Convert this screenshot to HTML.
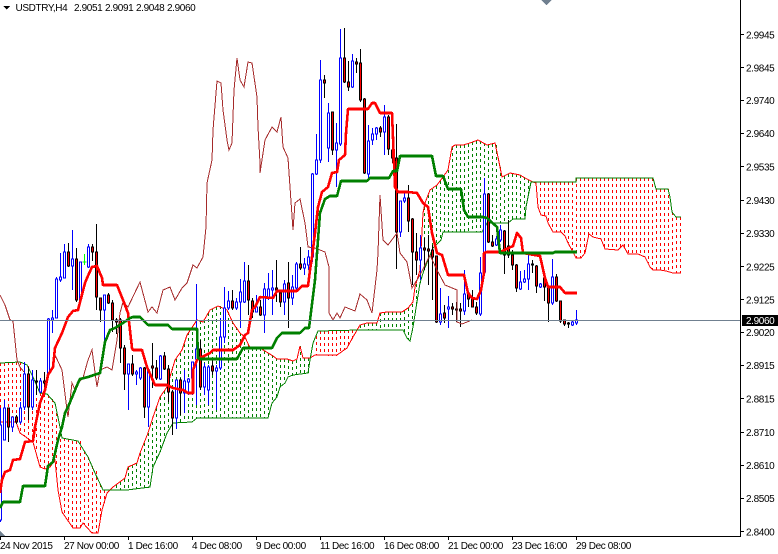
<!DOCTYPE html>
<html><head><meta charset="utf-8"><title>USDTRY,H4</title>
<style>
html,body{margin:0;padding:0;background:#fff}
svg{display:block}
text{font-family:"Liberation Sans",sans-serif;font-size:10px;fill:#000;letter-spacing:-.38px}
</style></head><body>
<svg width="778" height="554" viewBox="0 0 778 554" xmlns="http://www.w3.org/2000/svg">
<g fill="none" shape-rendering="crispEdges">
<!-- red hatch -->
<path stroke="#f00" stroke-dasharray="3 3" d="M.5 363V422M4.5 363V422M8.5 362V422M12.5 362V422M16.5 362V422M20.5 362V433M24.5 363V436M28.5 366V440M32.5 375V441M36.5 386V452M40.5 393V467M44.5 394V469M48.5 395V468M52.5 399V464M56.5 413V470M60.5 427V497M64.5 438V515M68.5 439V521M72.5 441V527M76.5 441V528M80.5 441V528M84.5 451V524M88.5 457V528M92.5 466V533M96.5 471V533M100.5 484V520M104.5 490V503M316.5 336V355M320.5 331V355M324.5 331V355M328.5 331V356M332.5 331V356M336.5 331V356M340.5 330V352M344.5 330V350M348.5 330V346M352.5 330V339M540.5 182V212M544.5 182V216M548.5 182V223M552.5 182V230M556.5 182V232M560.5 182V232M564.5 182V235M568.5 182V243M572.5 182V250M576.5 178V258M580.5 178V258M584.5 178V254M588.5 178V238M592.5 178V237M596.5 178V238M600.5 178V239M604.5 178V247M608.5 178V250M612.5 178V250M616.5 178V250M620.5 178V248M624.5 178V247M628.5 178V254M632.5 178V254M636.5 178V254M640.5 178V255M644.5 178V257M648.5 178V263M652.5 178V269M656.5 189V270M660.5 189V270M664.5 189V271M668.5 189V271M672.5 212V272M676.5 217V273M680.5 217V273"/>
<!-- green hatch -->
<path stroke="#008000" stroke-dasharray="3 3" d="M116.5 485V490M120.5 482V490M124.5 479V490M128.5 467V489M132.5 465V490M136.5 463V489M140.5 453V489M144.5 443V488M148.5 433V488M152.5 422V474M156.5 408V460M160.5 397V452M164.5 391V441M168.5 383V431M172.5 367V425M176.5 359V423M180.5 353V423M184.5 344V423M188.5 332V422M192.5 326V422M196.5 321V419M200.5 321V418M204.5 320V418M208.5 313V418M212.5 309V418M216.5 307V418M220.5 306V418M224.5 309V418M228.5 312V418M232.5 321V418M236.5 327V418M240.5 333V418M244.5 336V418M248.5 344V418M252.5 348V418M256.5 348V418M260.5 348V418M264.5 351V418M268.5 353V418M272.5 355V403M276.5 358V399M280.5 359V387M284.5 359V384M288.5 360V377M292.5 361V376M296.5 360V375M300.5 346V375M304.5 358V374M308.5 358V373M360.5 325V330M364.5 324V330M368.5 323V330M372.5 323V330M376.5 323V330M380.5 313V330M384.5 312V330M388.5 312V330M392.5 312V330M396.5 312V330M400.5 312V330M404.5 311V332M408.5 308V339M412.5 304V332M416.5 284V308M420.5 270V283M424.5 207V270M428.5 195V260M432.5 189V250M436.5 186V244M440.5 181V241M444.5 176V232M448.5 170V232M452.5 147V232M456.5 145V232M460.5 145V232M464.5 145V232M468.5 144V232M472.5 142V232M476.5 141V232M480.5 141V232M484.5 143V229M488.5 145V222M492.5 144V223M496.5 145V223M500.5 167V223M504.5 176V223M508.5 174V223M512.5 174V220M516.5 174V219M520.5 175V219M524.5 177V219M528.5 180V197"/>
<!-- span A -->
<path stroke="#f00" d="M0 422H16L20 433L33 442L40 467L45 469L50 467L55 460L58 490L62 512L73 528H80L83 523L92 533H98L102 510L107 493L113 487L125 478L128 467L137 463L140 453L148 433L153 417L160 397L167 387L175 360L182 350L187 335L197 320L203 322L210 310L218 306L227 310L233 323L240 333L245 337L250 348H260L273 356L277 359H287L293 361L297 359L300 346L303 358H310L315 355H337L347 348L353 337L360 325L367 323H377L380 313L387 312H402L408 308L413 302L415 287L420 270L423 213L425 203L430 190L437 185L443 177L448 170L452 147L455 145H463L470 143L478 140L487 145L495 143L498 157L502 177L510 173L520 175L525 178L533 182L536 183L538 207L541 215L546 216L548 223L553 232H561L565 236L568 243L573 252L576 258H581L585 253L587 243L589 234L593 237L601 239L605 249L618 250L623 245L628 254H638L645 257L650 267L653 270H660L666 271L673 273H681"/>
<!-- span B -->
<path stroke="#008000" d="M0 363L20 362L27 365L33 377L40 393L47 394L55 403L60 427L62 438L78 441L88 457L95 473L103 490H127L150 487L153 467L160 452L167 433L173 423L192 422L197 418H268L272 403L277 397L280 387L285 383L288 377L293 375L308 373L310 360L313 343L318 331L360 330H403L407 338L410 341L413 327L420 283L424 270L433 248L441 240L443 232H482L487 223H508L513 219H525L526 207L531 182H576V178H653L656 189H668L670 197L672 212L676 217H681"/>
<!-- blue wicks -->
<path stroke="#00f" d="M.5 408V522M4.5 400V440M12.5 417V432M20.5 402V424M24.5 362V410M32.5 370V410M40.5 378V393M48.5 318V374M52.5 310V333M56.5 277V318M60.5 253V282M64.5 244V278M72.5 230V290M80.5 262V300M88.5 244V268M104.5 295V342M128.5 364V410M136.5 370V385M140.5 367V380M148.5 370V427M160.5 355V380M176.5 380V429M184.5 370V413M188.5 378V395M192.5 362V395M196.5 284V405M204.5 363V395M208.5 365V405M216.5 365V410M220.5 318V370M224.5 287V343M228.5 291V310M236.5 298V310M240.5 279V328M244.5 262V303M256.5 295V312M264.5 283V333M268.5 273V300M272.5 270V315M284.5 280V315M292.5 275V305M296.5 262V290M304.5 258V275M308.5 250V270M312.5 173V262M316.5 134V175M320.5 60V163M328.5 103V162M336.5 123V187M340.5 29V146M352.5 54V88M368.5 125V178M372.5 128V145M376.5 127V140M384.5 105V155M400.5 201V237M404.5 193V203M420.5 235V280M440.5 288V325M448.5 296V328M464.5 270V315M480.5 257V316M484.5 178V274M496.5 236V246M500.5 225V242M520.5 271V290M524.5 270V283M528.5 255V290M540.5 283V288M552.5 259V305M572.5 321V326M576.5 310V325"/>
<!-- black wicks -->
<path stroke="#000" d="M8.5 408V442M16.5 415V424M28.5 367V420M36.5 370V395M44.5 372V394M68.5 243V267M76.5 248V302M92.5 244V261M96.5 224V310M100.5 298V322M108.5 293V304M112.5 300V332M116.5 318V334M120.5 318V363M124.5 345V390M132.5 355V376M144.5 367V418M152.5 343V388M156.5 360V380M164.5 352V370M168.5 365V402M172.5 390V435M180.5 378V415M200.5 340V390M212.5 360V375M232.5 290V310M248.5 265V315M252.5 298V318M260.5 300V316M276.5 260V302M280.5 290V307M288.5 262V328M300.5 247V270M324.5 75V98M332.5 112V155M344.5 28V83M348.5 61V91M356.5 58V73M360.5 49V102M364.5 98V174M380.5 126V137M388.5 115V155M392.5 141V163M396.5 124V269M408.5 185V232M412.5 218V285M416.5 233V275M424.5 238V270M428.5 235V285M432.5 245V300M436.5 256V323M444.5 305V323M452.5 303V315M456.5 302V322M460.5 303V327M468.5 293V307M472.5 290V307M476.5 302V315M488.5 193V243M492.5 235V247M504.5 230V274M508.5 220V258M512.5 250V270M516.5 264V292M532.5 260V273M536.5 265V293M544.5 273V301M548.5 287V322M556.5 274V302M560.5 301V323M564.5 320V326M568.5 322V328"/>
<!-- blue bodies -->
<path stroke="#00f" fill="#fff" d="M-.5 425h2V520h-2zM3.5 408h2V440h-2zM11.5 417h2V427h-2zM19.5 408h2V422h-2zM23.5 374h2V407h-2zM31.5 380h2V407h-2zM39.5 381h2V392h-2zM47.5 319h2V373h-2zM51.5 318h2V320h-2zM55.5 279h2V318h-2zM59.5 277h2V280h-2zM63.5 252h2V278h-2zM71.5 259h2V266h-2zM79.5 262h2V300h-2zM87.5 247h2V267h-2zM103.5 295h2V310h-2zM127.5 364h2V374h-2zM135.5 372h2V374h-2zM139.5 368h2V378h-2zM147.5 370h2V407h-2zM159.5 356h2V379h-2zM175.5 380h2V418h-2zM183.5 381h2V393h-2zM187.5 379h2V382h-2zM191.5 362h2V378h-2zM195.5 349h2V359h-2zM203.5 367h2V387h-2zM207.5 367h2V390h-2zM215.5 368h2V371h-2zM219.5 337h2V368h-2zM223.5 308h2V337h-2zM227.5 301h2V308h-2zM235.5 302h2V308h-2zM239.5 292h2V302h-2zM243.5 281h2V302h-2zM255.5 307h2V312h-2zM263.5 289h2V315h-2zM267.5 289h2V298h-2zM271.5 288h2V290h-2zM283.5 284h2V302h-2zM291.5 287h2V298h-2zM295.5 264h2V288h-2zM303.5 264h2V268h-2zM307.5 257h2V265h-2zM311.5 174h2V257h-2zM315.5 160h2V174h-2zM319.5 80h2V160h-2zM327.5 113h2V148h-2zM335.5 143h2V150h-2zM339.5 58h2V144h-2zM351.5 61h2V87h-2zM367.5 141h2V174h-2zM371.5 134h2V140h-2zM375.5 128h2V134h-2zM383.5 117h2V132h-2zM399.5 201h2V232h-2zM403.5 198h2V201h-2zM419.5 248h2V260h-2zM439.5 314h2V322h-2zM447.5 307h2V309h-2zM463.5 294h2V311h-2zM479.5 273h2V314h-2zM483.5 194h2V272h-2zM495.5 239h2V245h-2zM499.5 230h2V240h-2zM519.5 282h2V289h-2zM523.5 279h2V282h-2zM527.5 264h2V279h-2zM539.5 284h2V287h-2zM551.5 277h2V303h-2zM571.5 322h2V325h-2zM575.5 320h2V323h-2z"/>
<!-- red bodies -->
<path stroke="#000" fill="#f00" d="M7.5 408h2V427h-2zM15.5 417h2V422h-2zM27.5 374h2V407h-2zM35.5 381h2V382h-2zM43.5 381h2V383h-2zM67.5 252h2V266h-2zM75.5 259h2V300h-2zM91.5 247h2V252h-2zM95.5 252h2V297h-2zM99.5 298h2V310h-2zM107.5 295h2V303h-2zM111.5 303h2V320h-2zM115.5 320h2V322h-2zM119.5 320h2V348h-2zM123.5 348h2V374h-2zM131.5 364h2V374h-2zM143.5 368h2V407h-2zM151.5 366h2V368h-2zM155.5 368h2V378h-2zM163.5 356h2V369h-2zM167.5 369h2V392h-2zM171.5 392h2V418h-2zM179.5 380h2V393h-2zM199.5 349h2V387h-2zM211.5 366h2V371h-2zM231.5 301h2V308h-2zM247.5 281h2V300h-2zM251.5 301h2V312h-2zM259.5 307h2V315h-2zM275.5 288h2V290h-2zM279.5 293h2V302h-2zM287.5 283h2V298h-2zM299.5 264h2V268h-2zM323.5 80h2V83h-2zM331.5 112h2V150h-2zM343.5 58h2V82h-2zM347.5 82h2V87h-2zM355.5 62h2V64h-2zM359.5 63h2V100h-2zM363.5 99h2V173h-2zM379.5 128h2V132h-2zM387.5 117h2V149h-2zM391.5 150h2V158h-2zM395.5 158h2V232h-2zM407.5 198h2V221h-2zM411.5 219h2V252h-2zM415.5 252h2V260h-2zM423.5 248h2V250h-2zM427.5 249h2V251h-2zM431.5 250h2V257h-2zM435.5 256h2V322h-2zM443.5 313h2V318h-2zM451.5 307h2V309h-2zM455.5 309h2V310h-2zM459.5 309h2V311h-2zM467.5 293h2V299h-2zM471.5 299h2V307h-2zM475.5 307h2V313h-2zM487.5 194h2V242h-2zM491.5 242h2V246h-2zM503.5 231h2V255h-2zM507.5 246h2V255h-2zM511.5 255h2V265h-2zM515.5 265h2V288h-2zM531.5 264h2V265h-2zM535.5 266h2V286h-2zM543.5 278h2V287h-2zM547.5 287h2V303h-2zM555.5 277h2V301h-2zM559.5 301h2V321h-2zM563.5 320h2V324h-2zM567.5 323h2V324h-2z"/>
<path stroke="#0f0" d="M84.5 254V265M82.5 262H86.5"/>
<!-- chikou -->
<path stroke="#a52a2a" d="M0 295L5 305L10 320L13 321L17 360L20 367L24 372M55 355L62 370L67 410L68 417L72 383L75 390L78 383L83 378L88 360L92 350L97 387L100 370L107 367L112 370L117 340L120 313L123 302L128 307L140 282L148 312L152 307L157 313L163 290L170 287L175 300L182 288L187 283L193 265L197 268L203 257L206 227L207 183L212 160L213 130L217 81L221 83L223 110L227 140L229 150L232 143L234 90L237 58L240 80L244 87L248 62L252 63L257 97L258 127L260 163L260 173L265 140L272 127L277 132L281 117L283 147L288 158L290 187L293 230L295 203L300 199L305 223L308 247L315 248L325 252L329 267L329 313L333 320L337 313L340 318L345 307L355 311L360 294L367 300L372 313L377 270L378 253L380 195L383 240L388 245L397 233L400 253L407 262L412 288L420 275L430 255L437 270L445 285L457 290L457 322L462 324L472 320"/>
</g>
<!-- lines -->
<g fill="none" stroke-width="2.6" stroke-linejoin="round" shape-rendering="crispEdges">
<path stroke="#f00" d="M0 493L2 480L5 472L10 470L13 460L20 459L25 442L33 441L35 427L40 403L45 390L48 375L53 367L55 348L62 333L68 317L73 311L78 310L85 283L87 278L92 267L97 266L102 278L103 285H117L123 300L128 313L132 348L133 350H142L147 367L155 385H167L173 388L183 390L188 393H193L193 370L197 360L200 358L210 353L213 350H233L240 345L245 335L248 333L252 310L255 307L260 297L273 298L277 291H297L302 286H308L310 270L312 257L315 233L318 207L322 192L328 187L332 173L337 172L339 160L345 155L346 133L348 109H368L372 103H375L380 113H392L395 187L398 192H408L417 193L423 203L428 207L432 233L437 253L442 255L448 275H464L468 293L472 298L477 299L481 290L484 273L484 253L487 252H500L513 246L517 233L521 238L523 253L540 256L545 278L548 287L560 287L565 293H577"/>
<path stroke="#008000" d="M0 508L3 502H20L23 486H45L48 466L53 462L58 440L62 427L65 413L68 407L78 383L80 379L88 377L100 373L105 342L110 330L115 328L123 323L130 318L133 317H140L148 325H168L172 329H197L198 358L200 359H237L243 348H272L277 338L282 333H300L305 328H309L315 280L320 213L325 199L330 196H337L341 181H367L370 178H389L393 171H397L400 156H432L436 176H443L448 189H461L464 210L468 217H483L487 218L497 227L500 253H553L555 252H577"/>
</g>
<g shape-rendering="crispEdges">
<!-- price line -->
<path stroke="#708090" d="M0 320.5H741"/>
<!-- axes -->
<path stroke="#000" fill="none" d="M740.5 0V536.5H0M.5 537V540M64.5 537V540M128.5 537V540M192.5 537V540M256.5 537V540M320.5 537V540M384.5 537V540M448.5 537V540M512.5 537V540M576.5 537V540M741 34.5H744M741 67.5H744M741 100.5H744M741 133.5H744M741 166.5H744M741 200.5H744M741 233.5H744M741 266.5H744M741 299.5H744M741 332.5H744M741 365.5H744M741 398.5H744M741 432.5H744M741 465.5H744M741 498.5H744M741 531.5H744"/>
<rect x="742" y="315" width="36" height="11" fill="#000"/>
<path fill="#708090" d="M541 0H552L546.5 5zM0 531L5 536H0z"/>
<path fill="#000" d="M3 6H10L6.5 9.5z"/>
</g>
<!-- text -->
<text x="15.5" y="11">USDTRY,H4</text>
<text x="74" y="11">2.9051</text><text x="105" y="11">2.9091</text><text x="136" y="11">2.9048</text><text x="167" y="11">2.9060</text>
<g>
<text x="746" y="38.5">2.9945</text><text x="746" y="71.5">2.9845</text><text x="746" y="104">2.9740</text><text x="746" y="137">2.9640</text><text x="746" y="170.5">2.9535</text><text x="746" y="204">2.9430</text><text x="746" y="237">2.9330</text><text x="746" y="270.5">2.9225</text><text x="746" y="303.5">2.9125</text>
<text x="746" y="324" style="fill:#fff">2.9060</text>
<text x="746" y="336">2.9020</text><text x="746" y="369">2.8915</text><text x="746" y="402.5">2.8815</text><text x="746" y="436">2.8710</text><text x="746" y="469">2.8610</text><text x="746" y="502">2.8505</text><text x="746" y="535.5">2.8400</text>
</g>
<g>
<text x="0" y="549">24 Nov 2015</text><text x="64" y="549">27 Nov 00:00</text><text x="128" y="549">1 Dec 16:00</text><text x="192" y="549">4 Dec 08:00</text><text x="256" y="549">9 Dec 00:00</text><text x="320" y="549">11 Dec 16:00</text><text x="384" y="549">16 Dec 08:00</text><text x="448" y="549">21 Dec 00:00</text><text x="512" y="549">23 Dec 16:00</text><text x="576" y="549">29 Dec 08:00</text>
</g>
</svg>
</body></html>
